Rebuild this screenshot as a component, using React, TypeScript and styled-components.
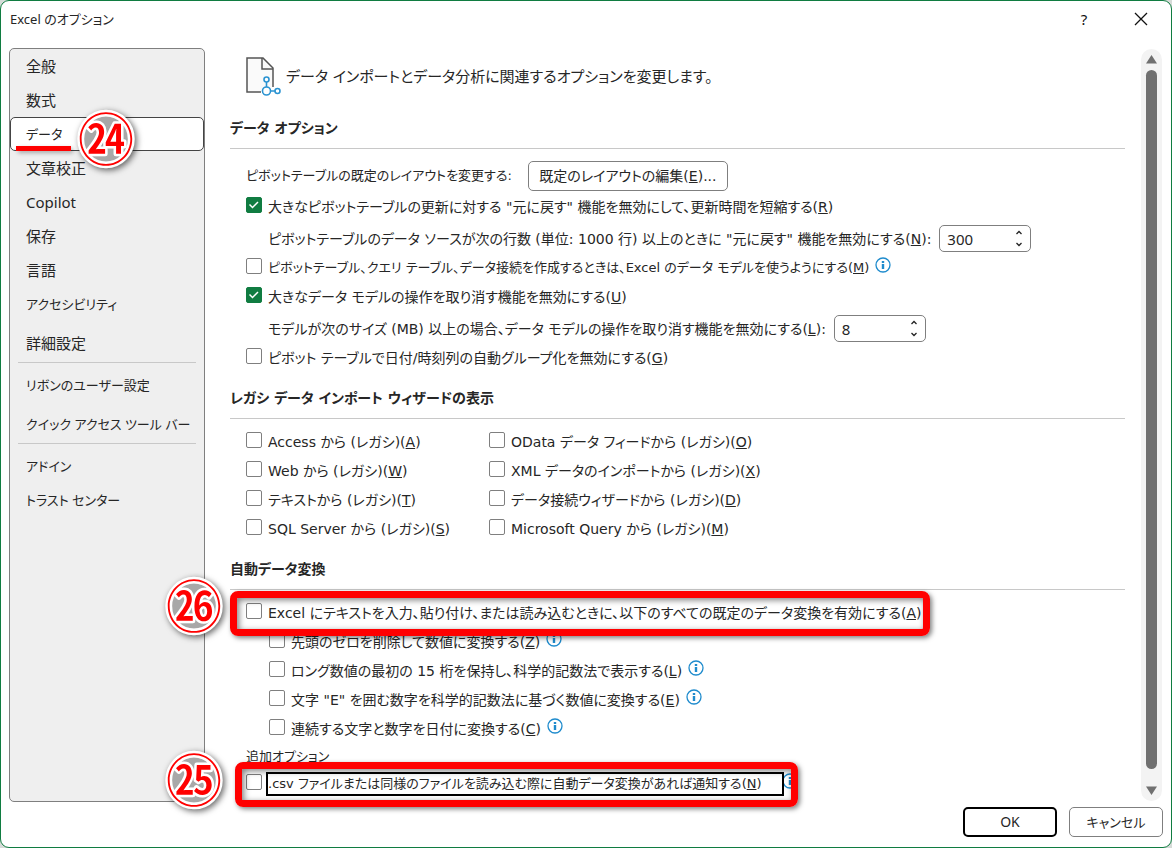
import React, { useState } from "react";
import styled, { createGlobalStyle, css } from "styled-components";

const uiFont = '"Noto Sans", "Noto Sans CJK JP", sans-serif';
const labelFont = '"DejaVu Sans", "Noto Sans CJK JP", sans-serif';

const GlobalStyle = createGlobalStyle`
  *, *::before, *::after { box-sizing: border-box; }
  html { background: #d6dbd8; }
  body {
    margin: 0;
    color: #262626;
    font-family: ${labelFont};
    font-size: 14px;
    line-height: 20px;
    font-feature-settings: "palt";
  }
  button, input { font: inherit; color: inherit; font-feature-settings: inherit; }
`;

const Dialog = styled.div`
  display: flex;
  flex-direction: column;
  min-height: 100vh;
  background: #fff;
  border: 1px solid #107c41;
  border-radius: 9px;
  overflow: hidden;
`;

const TitleBar = styled.header`
  display: flex;
  align-items: center;
  height: 36px;
  padding: 0 16px 0 9px;
  margin-bottom: 11px;
  font-family: ${uiFont};
`;

const Title = styled.h1`
  flex: 1;
  margin: 0;
  font-size: 13px;
  font-weight: 400;
`;

const TitleButton = styled.button`
  display: grid;
  place-items: center;
  width: 28px;
  height: 28px;
  margin-left: 29px;
  padding: 0;
  border: 0;
  background: none;
  color: #111;
  font-size: 15px;
`;

const Body = styled.div`
  display: flex;
  flex: 1;
  padding: 0 9px 0 8px;
`;

const Sidebar = styled.nav`
  flex: none;
  width: 196px;
  border: 1px solid #7f7f7f;
  border-radius: 5px;
  background: #efefef;
`;

const NavGroup = styled.ul`
  list-style: none;
  margin: 0;
  padding: 0;
`;

const NavItem = styled.li<{ $spaced?: boolean }>`
  position: relative;
  margin-top: ${(p) => (p.$spaced ? "5px" : "0")};
`;

const NavLink = styled.a<{ $active?: boolean; $kana?: boolean }>`
  display: flex;
  align-items: center;
  height: 34px;
  padding-left: 15px;
  border: 1px solid ${(p) => (p.$active ? "#444" : "transparent")};
  border-radius: 5px;
  background: ${(p) => (p.$active ? "#fff" : "transparent")};
  color: inherit;
  font-family: ${uiFont};
  font-size: ${(p) => (p.$kana ? "13px" : "15px")};
  text-decoration: none;
  white-space: nowrap;
`;

const NavRule = styled.hr`
  height: 1px;
  margin: 2px 8px 5px;
  border: 0;
  background: #c8c8c8;
`;

const Underline = styled.span`
  position: absolute;
  left: 6px;
  bottom: 0;
  width: 55px;
  height: 5px;
  background: #f00;
  box-shadow: 2px 2px 4px rgba(0, 0, 0, 0.3);
`;

const BadgeSpot = styled.span<{ $left: number; $top: number }>`
  position: absolute;
  z-index: 3;
  left: ${(p) => p.$left}px;
  top: ${(p) => p.$top}px;
  pointer-events: none;
`;

const BadgeSvg = styled.svg`
  display: block;
  overflow: visible;
  filter: drop-shadow(2px 2px 3px rgba(0, 0, 0, 0.6));
`;

const BadgeText = styled.text`
  font-family: "Noto Sans CJK JP", sans-serif;
  font-size: 56px;
  font-weight: 500;
  fill: #f00;
  stroke: #fff;
  stroke-width: 5px;
  stroke-linejoin: round;
  paint-order: stroke;
  text-anchor: middle;
`;

const Content = styled.main`
  flex: 1;
  min-width: 0;
  padding: 0 16px 0 25px;
`;

const Intro = styled.div`
  display: flex;
  align-items: center;
  height: 54px;
  padding: 3px 0 0 16px;
  gap: 5px;
  font-size: 15px;
`;

const SectionTitle = styled.h2`
  margin: 0 0 8px;
  padding: 16px 0 10px;
  border-bottom: 1px solid #c8c8c8;
  font-size: 14px;
  font-weight: 700;
`;

const Rows = styled.div`
  padding-left: 16px;
`;

const LayoutRow = styled.div`
  display: flex;
  align-items: center;
  gap: 16px;
  margin: 12px 0 1px;
`;

const LayoutLabel = styled.span`
  font-size: 13px;
`;

const Button = styled.button<{ $primary?: boolean; $wide?: boolean; $compact?: boolean }>`
  height: 30px;
  width: ${(p) => (p.$wide ? "200px" : "94px")};
  padding: 0;
  border: ${(p) => (p.$primary ? "2px solid #000" : "1px solid #7f7f7f")};
  border-radius: 5px;
  background: #fff;
  font-size: ${(p) => (p.$compact ? "13px" : "14px")};
`;

const OptionRow = styled.div<{ $indent?: boolean }>`
  display: flex;
  align-items: center;
  height: 29px;
  padding-left: ${(p) => (p.$indent ? "23px" : "0")};
  white-space: nowrap;
`;

const Anchor = styled.div`
  position: relative;
  display: flex;
  align-items: center;
  height: 29px;
`;

const Check = styled.label`
  display: flex;
  align-items: center;
`;

const CheckBox = styled.input`
  appearance: none;
  flex: none;
  width: 16px;
  height: 16px;
  margin: 0 6px 3px 0;
  border: 1px solid #7f7f7f;
  border-radius: 2px;
  background: #fff;
  &:checked {
    border-color: #107c41;
    background: #107c41;
  }
`;

const CheckCell = styled.span`
  position: relative;
  display: flex;
`;

const CheckMark = styled.svg`
  position: absolute;
  left: 0;
  top: 0;
  pointer-events: none;
`;

const CheckText = styled.span<{ $focused?: boolean; $compact?: boolean }>`
  font-size: ${(p) => (p.$compact ? "13px" : "14px")};
  ${(p) =>
    p.$focused &&
    css`
      outline: 2px solid #000;
      padding-right: 20px;
    `}
`;

const SpinRow = styled.div`
  display: flex;
  align-items: center;
  height: 32px;
  padding: 3px 0 0 22px;
  gap: 8px;
  white-space: nowrap;
`;

const SpinBox = styled.div`
  display: flex;
  width: 92px;
  height: 27px;
  border: 1px solid #7f7f7f;
  border-radius: 5px;
  background: #fff;
`;

const SpinInput = styled.input`
  flex: 1;
  min-width: 0;
  padding: 0 0 0 7px;
  border: 0;
  background: none;
  outline: 0;
  font-family: ${uiFont};
  font-size: 15px;
`;

const SpinButtons = styled.div`
  display: flex;
  flex-direction: column;
  width: 22px;
`;

const SpinButton = styled.button`
  display: grid;
  flex: 1;
  place-items: center;
  padding: 0;
  border: 0;
  background: none;
`;

const InfoButton = styled.button<{ $tight?: boolean }>`
  display: flex;
  padding: 0;
  margin: 0 0 6px ${(p) => (p.$tight ? "0" : "6px")};
  border: 0;
  background: none;
`;

const LegacyGrid = styled.div`
  display: grid;
  grid-template-columns: 243px 1fr;
`;

const SubHeading = styled.div`
  height: 26px;
  font-size: 13px;
  line-height: 28px;
`;

const Highlight = styled.span<{ $left: number; $right: number }>`
  position: absolute;
  z-index: 2;
  top: -7px;
  bottom: -9px;
  left: ${(p) => -p.$left}px;
  right: ${(p) => -p.$right}px;
  border: 7px solid #f00;
  border-radius: 8px;
  box-shadow: 2px 2px 5px rgba(0, 0, 0, 0.5), inset 2px 2px 6px rgba(0, 0, 0, 0.5);
  pointer-events: none;
`;

const ScrollBar = styled.div`
  display: flex;
  flex-direction: column;
  align-items: center;
  flex: none;
  width: 21px;
  margin: 1px 0 1px;
  padding: 6px 0;
  gap: 6px;
  border-radius: 11px;
  background: #f3f3f3;
`;

const ScrollThumb = styled.div`
  flex: 1;
  width: 11px;
  margin-bottom: 11px;
  border-radius: 6px;
  background: #707070;
`;

const Footer = styled.footer`
  display: flex;
  justify-content: flex-end;
  gap: 12px;
  padding: 5px 8px 10px;
  font-family: ${uiFont};
`;

const Info = ({ tight }: { tight?: boolean }) => (
  <InfoButton $tight={tight} type="button" aria-label="情報">
    <svg width="16" height="16" viewBox="0 0 16 16">
      <circle cx="8" cy="8" r="7" fill="#fff" stroke="#1e8bcd" strokeWidth="1.3" />
      <path d="M8 4v2M8 7v5" stroke="#1e8bcd" strokeWidth="2.4" />
    </svg>
  </InfoButton>
);

const Key = ({ k }: { k: string }) => (
  <>
    (<u>{k}</u>)
  </>
);

const Badge = ({ value, left, top }: { value: string; left: number; top: number }) => (
  <BadgeSpot $left={left} $top={top}>
    <BadgeSvg width="56" height="56" viewBox="0 0 56 56">
      <circle cx="28" cy="28" r="24" fill="#a8a8a8" />
      <BadgeText x="28" y="49">
        {value}
      </BadgeText>
    </BadgeSvg>
  </BadgeSpot>
);

type OptionProps = {
  text: string;
  k: string;
  on?: boolean;
  indent?: boolean;
  info?: boolean;
  focused?: boolean;
  compact?: boolean;
  children?: React.ReactNode;
};

const Option = ({ text, k, on = false, indent, info, focused, compact, children }: OptionProps) => {
  const [checked, setChecked] = useState(on);
  return (
    <OptionRow $indent={indent}>
      <Anchor>
        <Check>
          <CheckCell>
            <CheckBox type="checkbox" checked={checked} onChange={() => setChecked(!checked)} />
            {checked && (
              <CheckMark width="16" height="16" viewBox="0 0 16 16">
                <path d="M3.5 7.5l3 3 5.500-5.500" fill="none" stroke="#fff" strokeWidth="1.5" />
              </CheckMark>
            )}
          </CheckCell>
          <CheckText $focused={focused} $compact={compact}>
            {text}
            <Key k={k} />
          </CheckText>
        </Check>
        {children}
      </Anchor>
      {info && <Info tight={focused} />}
    </OptionRow>
  );
};

const Spinner = ({ id, text, k, initial }: { id: string; text: string; k: string; initial: number }) => {
  const [value, setValue] = useState(initial);
  return (
    <SpinRow>
      <label htmlFor={id}>
        {text}
        <Key k={k} />:
      </label>
      <SpinBox>
        <SpinInput id={id} type="text" value={value} onChange={(e) => setValue(Number(e.target.value) || 0)} />
        <SpinButtons>
          <SpinButton type="button" aria-label="増やす" onClick={() => setValue(value + 1)}>
            <svg width="8" height="5" viewBox="0 0 8 5">
              <path d="M1.500 4L4 1.500 6.500 4" fill="none" stroke="#222" strokeWidth="1.3" />
            </svg>
          </SpinButton>
          <SpinButton type="button" aria-label="減らす" onClick={() => setValue(value - 1)}>
            <svg width="8" height="5" viewBox="0 0 8 5">
              <path d="M1.500 1L4 3.500 6.500 1" fill="none" stroke="#222" strokeWidth="1.3" />
            </svg>
          </SpinButton>
        </SpinButtons>
      </SpinBox>
    </SpinRow>
  );
};

const legacy = [
  ["Access から (レガシ)", "A"],
  ["OData データ フィードから (レガシ)", "O"],
  ["Web から (レガシ)", "W"],
  ["XML データのインポートから (レガシ)", "X"],
  ["テキストから (レガシ)", "T"],
  ["データ接続ウィザードから (レガシ)", "D"],
  ["SQL Server から (レガシ)", "S"],
  ["Microsoft Query から (レガシ)", "M"],
];

const mainNav = ["全般", "数式", "データ", "文章校正", "Copilot", "保存", "言語", "アクセシビリティ", "詳細設定"];

const hasKana = (name: string) => /[ァ-ヶ]/.test(name);

export default function App() {
  return (
    <>
      <GlobalStyle />
      <Dialog>
        <TitleBar>
          <Title>Excel のオプション</Title>
          <TitleButton type="button" aria-label="ヘルプ">
            ?
          </TitleButton>
          <TitleButton type="button" aria-label="閉じる">
            <svg width="14" height="14" viewBox="0 0 14 14">
              <path d="M1 1l12 12M13 1L1 13" stroke="#111" strokeWidth="1.3" />
            </svg>
          </TitleButton>
        </TitleBar>
        <Body>
          <Sidebar>
            <NavGroup>
              {mainNav.map((name) => (
                <NavItem key={name} $spaced={name === "詳細設定"}>
                  <NavLink href="#" $active={name === "データ"} $kana={hasKana(name)}>
                    {name}
                  </NavLink>
                  {name === "データ" && (
                    <>
                      <Underline />
                      <Badge value="㉔" left={68} top={-6} />
                    </>
                  )}
                </NavItem>
              ))}
            </NavGroup>
            <NavRule />
            <NavGroup>
              <NavItem>
                <NavLink href="#" $kana>
                  リボンのユーザー設定
                </NavLink>
              </NavItem>
              <NavItem $spaced>
                <NavLink href="#" $kana>
                  クイック アクセス ツール バー
                </NavLink>
              </NavItem>
            </NavGroup>
            <NavRule />
            <NavGroup>
              <NavItem>
                <NavLink href="#" $kana>
                  アドイン
                </NavLink>
              </NavItem>
              <NavItem>
                <NavLink href="#" $kana>
                  トラスト センター
                </NavLink>
              </NavItem>
            </NavGroup>
          </Sidebar>
          <Content>
            <Intro>
              <svg width="35" height="40" viewBox="0 0 35 40">
                <path d="M27 30V11L17 1H1v34h14" fill="#fafafa" stroke="#555" strokeWidth="1.5" />
                <path d="M16 1v11h11" fill="none" stroke="#555" strokeWidth="1.5" />
                <g fill="#fff" stroke="#2b93d1" strokeWidth="1.6">
                  <path d="M20.500 25v5M24 34h5" />
                  <circle cx="20.500" cy="22.500" r="2.500" />
                  <circle cx="20.500" cy="34" r="4" />
                  <circle cx="31.500" cy="34" r="2.500" />
                </g>
              </svg>
              データ インポートとデータ分析に関連するオプションを変更します。
            </Intro>
            <SectionTitle>データ オプション</SectionTitle>
            <Rows>
              <LayoutRow>
                <LayoutLabel>ピボットテーブルの既定のレイアウトを変更する:</LayoutLabel>
                <Button type="button" $wide>
                  既定のレイアウトの編集
                  <Key k="E" />
                  ...
                </Button>
              </LayoutRow>
              <Option on text={'大きなピボットテーブルの更新に対する "元に戻す" 機能を無効にして、更新時間を短縮する'} k="R" />
              <Spinner
                id="rows"
                text={'ピボットテーブルのデータ ソースが次の行数 (単位: 1000 行) 以上のときに "元に戻す" 機能を無効にする'}
                k="N"
                initial={300}
              />
              <Option
                info
                compact
                text="ピボットテーブル、クエリ テーブル、データ接続を作成するときは、Excel のデータ モデルを使うようにする"
                k="M"
              />
              <Option on text="大きなデータ モデルの操作を取り消す機能を無効にする" k="U" />
              <Spinner
                id="size"
                text="モデルが次のサイズ (MB) 以上の場合、データ モデルの操作を取り消す機能を無効にする"
                k="L"
                initial={8}
              />
              <Option text="ピボット テーブルで日付/時刻列の自動グループ化を無効にする" k="G" />
            </Rows>
            <SectionTitle>レガシ データ インポート ウィザードの表示</SectionTitle>
            <Rows>
              <LegacyGrid>
                {legacy.map(([text, k]) => (
                  <Option key={k} text={text} k={k} />
                ))}
              </LegacyGrid>
            </Rows>
            <SectionTitle>自動データ変換</SectionTitle>
            <Rows>
              <Option text="Excel にテキストを入力、貼り付け、または読み込むときに、以下のすべての既定のデータ変換を有効にする" k="A">
                <Highlight $left={16} $right={9} />
                <Badge value="㉖" left={-80} top={-20} />
              </Option>
              <Option indent info text="先頭のゼロを削除して数値に変換する" k="Z" />
              <Option indent info text="ロング数値の最初の 15 桁を保持し、科学的記数法で表示する" k="L" />
              <Option indent info text={'文字 "E" を囲む数字を科学的記数法に基づく数値に変換する'} k="E" />
              <Option indent info text="連続する文字と数字を日付に変換する" k="C" />
              <SubHeading>追加オプション</SubHeading>
              <Option
                focused
                info
                compact
                text=".csv ファイルまたは同様のファイルを読み込む際に自動データ変換があれば通知する"
                k="N"
              >
                <Highlight $left={11} $right={16} />
                <Badge value="㉕" left={-80} top={-17} />
              </Option>
            </Rows>
          </Content>
          <ScrollBar>
            <svg width="11" height="9" viewBox="0 0 11 9">
              <path d="M5.500 0L11 8.500H0z" fill="#707070" />
            </svg>
            <ScrollThumb />
            <svg width="11" height="9" viewBox="0 0 11 9">
              <path d="M0 .5h11L5.500 9z" fill="#707070" />
            </svg>
          </ScrollBar>
        </Body>
        <Footer>
          <Button type="button" $primary>
            OK
          </Button>
          <Button type="button" $compact>
            キャンセル
          </Button>
        </Footer>
      </Dialog>
    </>
  );
}
